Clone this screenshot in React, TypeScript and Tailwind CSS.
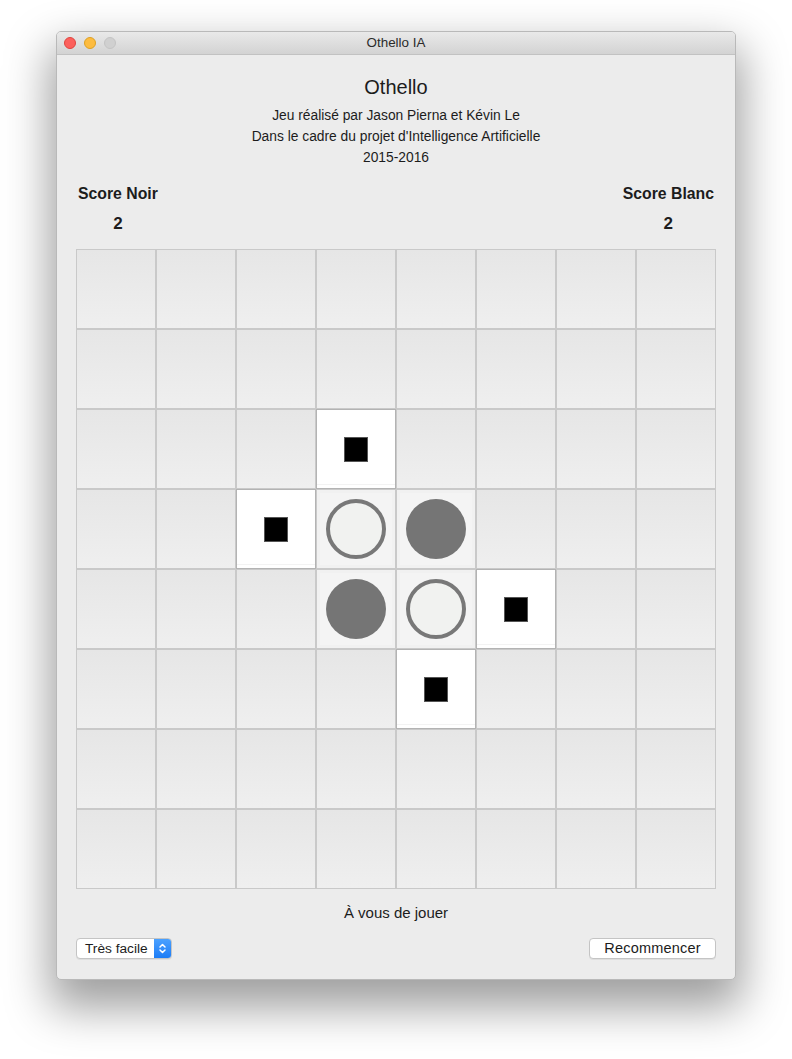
import React from "react";

type Cell = "" | "m" | "w" | "b";

// 8x8 board: m = possible move, w = white disc, b = black (grey) disc
const BOARD: Cell[][] = [
  ["", "", "", "", "", "", "", ""],
  ["", "", "", "", "", "", "", ""],
  ["", "", "", "m", "", "", "", ""],
  ["", "", "m", "w", "b", "", "", ""],
  ["", "", "", "b", "w", "m", "", ""],
  ["", "", "", "", "m", "", "", ""],
  ["", "", "", "", "", "", "", ""],
  ["", "", "", "", "", "", "", ""],
];

function BoardCell({ value }: { value: Cell }) {
  if (value === "m") {
    return (
      <div className="flex h-[80px] w-[80px] items-center justify-center border border-[#b3b3b3] bg-white shadow-[inset_0_-3px_0_#ffffff,inset_0_-4px_0_#f3f3f3]">
        <div className="h-[25px] w-[24px] border border-[#555] bg-black" />
      </div>
    );
  }
  if (value === "w" || value === "b") {
    return (
      <div className="flex h-[80px] w-[80px] items-center justify-center border border-[#c9c9c9] bg-[#f4f4f4] shadow-[inset_0_0_0_3px_#f1f1f1]">
        {value === "w" ? (
          <div className="h-[60px] w-[60px] rounded-full border-[4px] border-[#787878] bg-[#f1f2f0]" />
        ) : (
          <div className="h-[60px] w-[60px] rounded-full bg-[#757575]" />
        )}
      </div>
    );
  }
  return (
    <div className="h-[80px] w-[80px] border border-[#c9c9c9] bg-gradient-to-b from-[#e6e6e6] to-[#efefef]" />
  );
}

function Score({ label }: { label: string }) {
  return (
    <div className="flex flex-col items-center">
      <span className="text-[15.8px] leading-[18px] font-bold text-[#1c1c1c]">{label}</span>
      <span className="mt-[11px] text-[17px] leading-[20px] font-bold text-[#1c1c1c]">2</span>
    </div>
  );
}

export default function App() {
  return (
    <div
      className="h-[1059px] w-[792px] bg-white pt-[31px] pl-[56px]"
      style={{ fontFamily: '"Liberation Sans", Arial, sans-serif' }}
    >
      <div className="w-[680px] overflow-hidden rounded-[5px] border border-[#b9b9b9] bg-[#ececec] shadow-[0_22px_45px_6px_rgba(0,0,0,0.38)]">
        {/* Title bar */}
        <div className="relative flex h-[23px] items-center justify-center border-b border-[#c2c2c2] bg-gradient-to-b from-[#e9e9e9] to-[#d3d3d3]">
          <div className="absolute left-[7px] top-[5px] flex gap-[8px]">
            <span className="h-[12px] w-[12px] rounded-full border border-[#e0443e] bg-[#fc605c]" />
            <span className="h-[12px] w-[12px] rounded-full border border-[#dea123] bg-[#fdbc40]" />
            <span className="h-[12px] w-[12px] rounded-full border border-[#c4c4c4] bg-[#d0d0d0]" />
          </div>
          <span className="text-[13.4px] text-[#2b2b2b]">Othello IA</span>
        </div>

        <div className="flex flex-col px-[19px] pt-[20px] pb-[20px]">
          {/* Header */}
          <div className="flex flex-col items-center text-[#1c1c1c]">
            <h1 className="text-[20px] leading-[24px]">Othello</h1>
            <div className="mt-[6px] flex flex-col items-center text-[13.8px] leading-[21px]">
              <span>Jeu réalisé par Jason Pierna et Kévin Le</span>
              <span>Dans le cadre du projet d'Intelligence Artificielle</span>
              <span>2015-2016</span>
            </div>
          </div>

          {/* Scores */}
          <div className="mt-[17px] flex justify-between px-[2px]">
            <Score label="Score Noir" />
            <Score label="Score Blanc" />
          </div>

          {/* Board */}
          <div className="mt-[15px] grid grid-cols-8">
            {BOARD.map((row, r) =>
              row.map((c, i) => <BoardCell key={`${r}-${i}`} value={c} />)
            )}
          </div>

          <p className="mt-[15px] text-center text-[15px] leading-[18px] text-[#1c1c1c]">À vous de jouer</p>

          {/* Controls */}
          <div className="mt-[16px] flex items-center justify-between">
            <div className="flex h-[21px] w-[96px] overflow-hidden rounded-[4px] border border-[#c4c4c4] bg-white shadow-[0_1px_0_rgba(0,0,0,0.06)]">
              <span className="flex-1 pl-[8px] text-[13.7px] leading-[19px] text-[#1c1c1c]">Très facile</span>
              <span className="flex w-[17px] items-center justify-center bg-gradient-to-b from-[#4aa1ff] to-[#1b7cf6]">
                <svg width="9" height="13" viewBox="0 0 9 13" fill="none" stroke="#fff" strokeWidth="1.5" strokeLinecap="round" strokeLinejoin="round">
                  <path d="M2 5 L4.5 2.5 L7 5" />
                  <path d="M2 8 L4.5 10.5 L7 8" />
                </svg>
              </span>
            </div>
            <button className="h-[21px] w-[127px] rounded-[4px] border border-[#c4c4c4] bg-white text-[14.5px] leading-[19px] tracking-[0.2px] text-[#1c1c1c] shadow-[0_1px_0_rgba(0,0,0,0.06)]">
              Recommencer
            </button>
          </div>
        </div>
      </div>
    </div>
  );
}
